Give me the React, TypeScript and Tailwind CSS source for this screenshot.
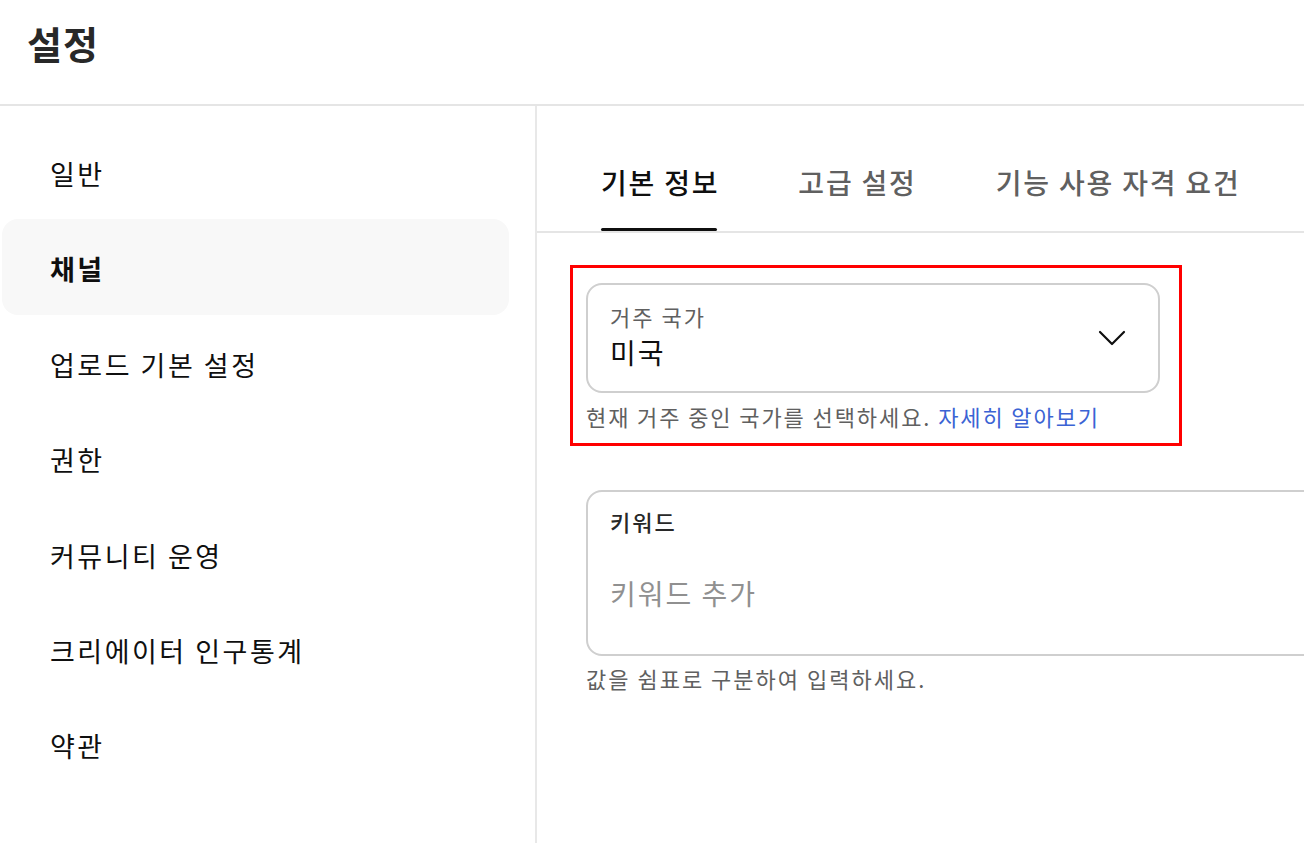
import { ChevronDown } from "lucide-react";

const menu = ["일반", "채널", "업로드 기본 설정", "권한", "커뮤니티 운영", "크리에이터 인구통계", "약관"];
const tabs = ["기본 정보", "고급 설정", "기능 사용 자격 요건"];

export default function App() {
  return (
    <div
      className="w-[1304px] h-[843px] overflow-hidden bg-white text-[#0f0f0f] flex flex-col"
      style={{ fontFamily: '"Noto Sans CJK KR", "Noto Sans", sans-serif' }}
    >
      <header className="h-[106px] shrink-0 border-b-2 border-[#e5e5e5] flex items-center pl-[27px] pb-[18px]">
        <h1 className="text-[38px] font-bold leading-none tracking-[1px] text-[#282828]">설정</h1>
      </header>

      <div className="flex flex-1 min-h-0">
        <aside className="w-[537px] shrink-0 border-r-2 border-[#e8e8e8] pt-[18px] pl-[2px] pr-[26px]">
          {menu.map((item) => {
            const active = item === "채널";
            return (
              <div
                key={item}
                className={`h-[95.4px] flex items-center pl-[48px] pt-[5px] rounded-[16px] text-[27px] tracking-[2.5px] ${
                  active ? "bg-[#f8f8f8] font-bold" : "text-[#0f0f0f]"
                }`}
              >
                {item}
              </div>
            );
          })}
        </aside>

        <main className="flex-1 min-w-0 overflow-hidden">
          <div className="h-[127px] border-b-2 border-[#e5e5e5] flex items-end pl-[64px] gap-[79px]">
            {tabs.map((t, i) => (
              <div key={t} className="flex flex-col items-stretch">
                <span
                  className={`text-[28px] font-medium leading-[40px] tracking-[1.8px] ${
                    i === 0 ? "text-[#0f0f0f]" : "text-[#606060]"
                  }`}
                >
                  {t}
                </span>
                <div
                  className={`mt-[26px] mr-[2px] h-[3px] rounded-full ${i === 0 ? "bg-[#0f0f0f]" : "bg-transparent"}`}
                />
              </div>
            ))}
          </div>

          <div className="pl-[33px] pt-[32px]">
            <div className="w-[612px] border-[3px] border-[#ff0000] pl-[13px] pr-[19px] pt-[15px] pb-[12px]">
              <div className="h-[110px] rounded-[16px] border-2 border-[#cfcfcf] flex items-center pl-[22px] pr-[22px]">
                <div className="flex-1 flex flex-col">
                  <span className="text-[22px] leading-[28px] tracking-[2px] text-[#606060]">거주 국가</span>
                  <span className="text-[28px] leading-[44px] tracking-[2px] text-[#0f0f0f]">미국</span>
                </div>
                <ChevronDown size={48} strokeWidth={1.1} className="text-[#0f0f0f]" />
              </div>
              <p className="mt-[8px] text-[22px] leading-[30px] tracking-[1.9px] text-[#606060]">
                현재 거주 중인 국가를 선택하세요. <span className="text-[#3b63d4]">자세히 알아보기</span>
              </p>
            </div>

            <div className="ml-[16px] mt-[44px] w-[820px]">
              <div className="h-[166px] rounded-[16px] border-2 border-[#cfcfcf] pl-[22px] pt-[14px]">
                <div className="text-[22px] leading-[30px] tracking-[2px] font-medium text-[#282828]">키워드</div>
                <div className="mt-[36px] text-[28px] leading-[42px] tracking-[2px] text-[#909090]">키워드 추가</div>
              </div>
              <p className="mt-[7px] text-[22px] leading-[30px] tracking-[2px] text-[#606060]">
                값을 쉼표로 구분하여 입력하세요.
              </p>
            </div>
          </div>
        </main>
      </div>
    </div>
  );
}
